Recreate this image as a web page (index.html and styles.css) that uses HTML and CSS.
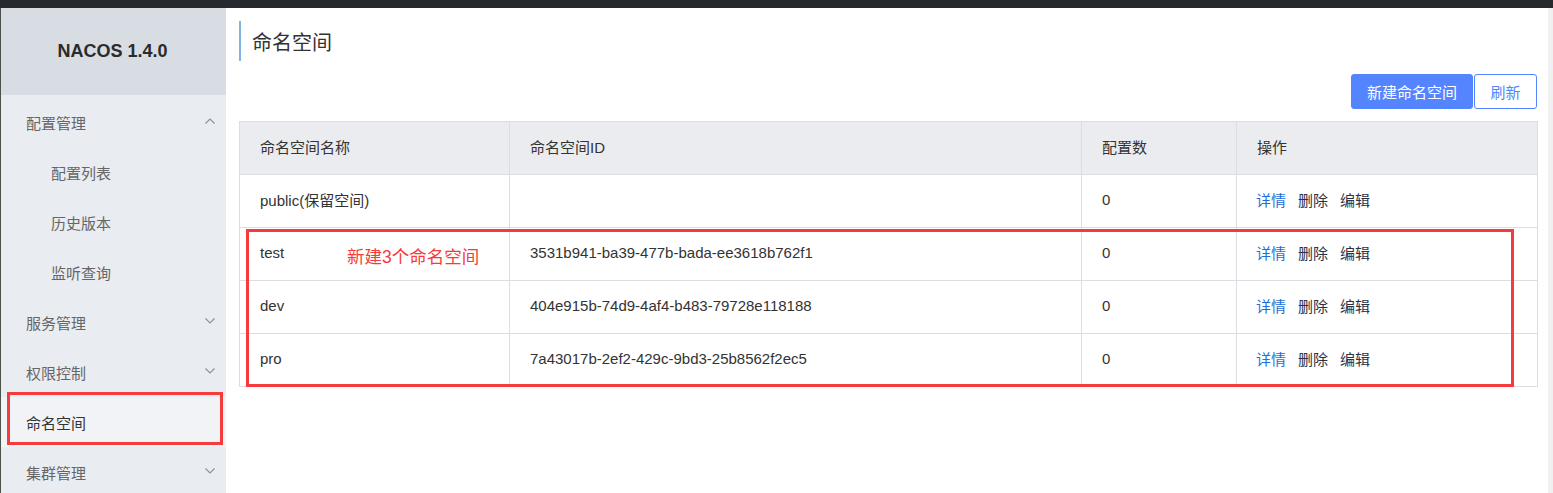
FILE: index.html
```html
<!DOCTYPE html>
<html lang="zh-CN">
<head>
<meta charset="utf-8">
<title>NACOS 1.4.0 - 命名空间</title>
<link rel="stylesheet" href="styles.css">
</head>
<body>
<div class="topbar"></div>
<div class="app">
  <aside class="sidebar">
    <div class="brand">NACOS 1.4.0</div>
    <ul class="menu">
      <li class="item lvl1"><span>配置管理</span>
        <svg class="chev" viewBox="0 0 10 6" width="10" height="6"><path d="M0.5 5.5 L5 1 L9.5 5.5" fill="none" stroke="#8a8f99" stroke-width="1.1"/></svg>
      </li>
      <li class="item lvl2"><span>配置列表</span></li>
      <li class="item lvl2"><span>历史版本</span></li>
      <li class="item lvl2"><span>监听查询</span></li>
      <li class="item lvl1"><span>服务管理</span>
        <svg class="chev" viewBox="0 0 10 6" width="10" height="6"><path d="M0.5 0.5 L5 5 L9.5 0.5" fill="none" stroke="#8a8f99" stroke-width="1.1"/></svg>
      </li>
      <li class="item lvl1"><span>权限控制</span>
        <svg class="chev" viewBox="0 0 10 6" width="10" height="6"><path d="M0.5 0.5 L5 5 L9.5 0.5" fill="none" stroke="#8a8f99" stroke-width="1.1"/></svg>
      </li>
      <li class="item lvl1 active"><span>命名空间</span><i class="mark-box"></i></li>
      <li class="item lvl1"><span>集群管理</span>
        <svg class="chev" viewBox="0 0 10 6" width="10" height="6"><path d="M0.5 0.5 L5 5 L9.5 0.5" fill="none" stroke="#8a8f99" stroke-width="1.1"/></svg>
      </li>
    </ul>
  </aside>
  <main class="main">
    <h1 class="page-title">命名空间</h1>
    <div class="toolbar">
      <button class="btn primary">新建命名空间</button>
      <button class="btn normal">刷新</button>
    </div>
    <div class="table-wrap">
      <table class="grid">
        <colgroup>
          <col class="c1"><col class="c2"><col class="c3"><col class="c4">
        </colgroup>
        <thead>
          <tr><th>命名空间名称</th><th>命名空间ID</th><th>配置数</th><th>操作</th></tr>
        </thead>
        <tbody>
          <tr><td>public(保留空间)</td><td></td><td>0</td><td class="ops"><a class="op blue">详情</a><a class="op dark">删除</a><a class="op dark">编辑</a></td></tr>
          <tr><td>test</td><td>3531b941-ba39-477b-bada-ee3618b762f1</td><td>0</td><td class="ops"><a class="op blue">详情</a><a class="op dark">删除</a><a class="op dark">编辑</a></td></tr>
          <tr><td>dev</td><td>404e915b-74d9-4af4-b483-79728e118188</td><td>0</td><td class="ops"><a class="op blue">详情</a><a class="op dark">删除</a><a class="op dark">编辑</a></td></tr>
          <tr><td>pro</td><td>7a43017b-2ef2-429c-9bd3-25b8562f2ec5</td><td>0</td><td class="ops"><a class="op blue">详情</a><a class="op dark">删除</a><a class="op dark">编辑</a></td></tr>
        </tbody>
      </table>
      <div class="annot-box"></div>
      <div class="annot-text">新建3个命名空间</div>
    </div>
  </main>
  <div class="scrollbar"></div>
</div>
</body>
</html>
```

FILE: styles.css
```css
* { box-sizing: border-box; }
html, body {
  margin: 0;
  padding: 0;
  width: 1553px;
  height: 493px;
  overflow: hidden;
  background: #fff;
  font-family: "Liberation Sans", "Noto Sans CJK SC", sans-serif;
  font-size: 15px;
  color: #333;
}
.topbar {
  height: 8px;
  background: #262a2f;
}
.app {
  display: flex;
  height: 485px;
}
.sidebar {
  width: 226px;
  flex: 0 0 226px;
  background: #e9ecf0;
  border-left: 1px solid #4b524b;
  display: flex;
  flex-direction: column;
  overflow: hidden;
}
.brand {
  flex: 0 0 87px;
  height: 87px;
  background: #d8dce3;
  display: flex;
  align-items: center;
  justify-content: center;
  font-weight: bold;
  font-size: 18px;
  color: #2b2b2b;
  padding-right: 2px;
}
.menu {
  flex: 0 0 auto;
  list-style: none;
  margin: 0;
  padding: 2px 0 0;
}
.item {
  position: relative;
  height: 50px;
  display: flex;
  align-items: center;
  justify-content: space-between;
  color: #666;
  padding-right: 11px;
}
.lvl1 { padding-left: 25px; }
.lvl2 { padding-left: 50px; }
.item.active {
  background: #f2f3f7;
  color: #333;
}
.chev { display: block; margin-top: -2px; }
.mark-box {
  position: absolute;
  left: 6px;
  right: 3px;
  top: -5px;
  height: 53px;
  border: 3px solid #f53b3b;
}
.main {
  flex: 1;
  padding: 13px 11px 0 13px;
  min-width: 0;
}
.page-title {
  margin: 0;
  height: 40px;
  border-left: 2px solid #7fb3e3;
  padding-left: 11px;
  padding-top: 4px;
  font-size: 20px;
  font-weight: normal;
  line-height: 36px;
  color: #333;
}
.toolbar {
  display: flex;
  justify-content: flex-end;
  margin-top: 13px;
  height: 35px;
}
.btn {
  font-family: inherit;
  font-size: 15px;
  height: 35px;
  padding: 0;
  border-radius: 3px;
  cursor: pointer;
  white-space: nowrap;
  text-align: center;
}
.btn.primary {
  background: #5584ff;
  border: 1px solid #5584ff;
  color: #fff;
  width: 122px;
}
.btn.normal {
  background: #fff;
  border: 1px solid #5584ff;
  color: #5584ff;
  width: 63px;
  margin-left: 1px;
}
.table-wrap {
  position: relative;
  margin-top: 12px;
}
.grid {
  width: 1298px;
  border-collapse: collapse;
  table-layout: fixed;
  border: 1px solid #dcdee3;
}
.c1 { width: 270px; }
.c2 { width: 572px; }
.c3 { width: 155px; }
.c4 { width: 301px; }
.grid th, .grid td {
  height: 53px;
  padding: 0 20px 4px;
  text-align: left;
  border: 1px solid #dcdee3;
  font-weight: normal;
  color: #333;
  white-space: nowrap;
}
.grid td.ops { padding-left: 19px; }
.grid th { background: #ebecf0; }
.op { margin-right: 12px; cursor: pointer; }
.op.blue { color: #1f6fd6; }
.op.dark { color: #2b3245; }
.annot-box {
  position: absolute;
  left: 7px;
  top: 108px;
  width: 1268px;
  height: 158px;
  border: 3px solid #f53b3b;
}
.annot-text {
  position: absolute;
  left: 108px;
  top: 124px;
  font-size: 17.5px;
  color: #f53b3b;
  line-height: 24px;
}
.scrollbar {
  width: 5px;
  flex: 0 0 5px;
  background: #f0f0f0;
}
```
